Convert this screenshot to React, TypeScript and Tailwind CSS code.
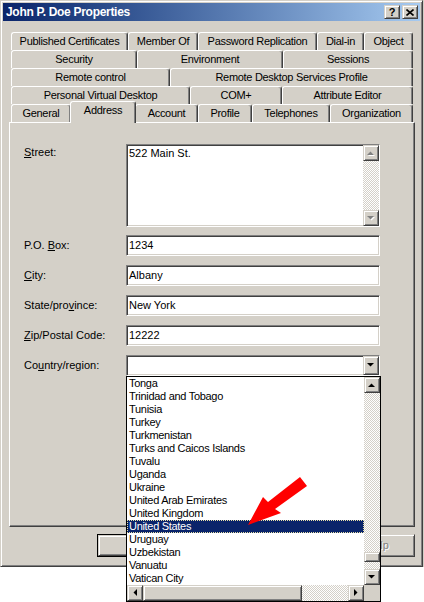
import React from 'react';

// classic 3d edges
const raised =
  'bg-[#d4d0c8] border border-t-[#d4d0c8] border-l-[#d4d0c8] border-r-[#404040] border-b-[#404040] shadow-[inset_1px_1px_0_#ffffff,inset_-1px_-1px_0_#808080]';
const sunken =
  'bg-white border border-t-[#808080] border-l-[#808080] border-r-white border-b-white shadow-[inset_1px_1px_0_#404040,inset_-1px_-1px_0_#d4d0c8]';
const checker =
  'bg-[image:repeating-conic-gradient(#d4d0c8_0_25%,#ffffff_0_50%)] bg-[length:2px_2px]';

type Dir = 'up' | 'down' | 'left' | 'right';

const triPts: Record<Dir, string> = {
  up: '0,4 7,4 3.5,0.5',
  down: '0,0 7,0 3.5,3.5',
  left: '4,0 4,7 0.5,3.5',
  right: '0,0 0,7 3.5,3.5',
};

const Tri = ({ dir, disabled }: { dir: Dir; disabled?: boolean }) => {
  const horiz = dir === 'left' || dir === 'right';
  const w = horiz ? 5 : 8;
  const h = horiz ? 8 : 5;
  return (
    <svg width={w} height={h} viewBox={`0 0 ${w} ${h}`}>
      {disabled && <polygon points={triPts[dir]} fill="#ffffff" transform="translate(1,1)" />}
      <polygon points={triPts[dir]} fill={disabled ? '#808080' : '#000000'} />
    </svg>
  );
};

const ScrollBtn = ({ dir, disabled }: { dir: Dir; disabled?: boolean }) => (
  <div className={`${raised} w-[16px] h-[16px] shrink-0 flex items-center justify-center`}>
    <Tri dir={dir} disabled={disabled} />
  </div>
);

const tabBase =
  'flex h-[18px] items-center justify-center whitespace-nowrap tracking-[-0.3px] bg-[#d4d0c8] border-l border-t border-r border-l-white border-t-white border-r-[#404040] shadow-[inset_-1px_0_0_#808080] rounded-t-[3px]';

const tabRows: { label: string; w: string; selected?: boolean }[][] = [
  [
    { label: 'Published Certificates', w: 'w-[117px]' },
    { label: 'Member Of', w: 'w-[70px]' },
    { label: 'Password Replication', w: 'w-[119px]' },
    { label: 'Dial-in', w: 'w-[47px]' },
    { label: 'Object', w: 'w-[49px]' },
  ],
  [
    { label: 'Security', w: 'w-[126px]' },
    { label: 'Environment', w: 'w-[146px]' },
    { label: 'Sessions', w: 'w-[130px]' },
  ],
  [
    { label: 'Remote control', w: 'w-[159px]' },
    { label: 'Remote Desktop Services Profile', w: 'w-[243px]' },
  ],
  [
    { label: 'Personal Virtual Desktop', w: 'w-[179px]' },
    { label: 'COM+', w: 'w-[92px]' },
    { label: 'Attribute Editor', w: 'w-[131px]' },
  ],
  [
    { label: 'General', w: 'w-[60px]' },
    { label: 'Address', w: 'w-[66px]', selected: true },
    { label: 'Account', w: 'w-[63px]' },
    { label: 'Profile', w: 'w-[54px]' },
    { label: 'Telephones', w: 'w-[78px]' },
    { label: 'Organization', w: 'w-[83px]' },
  ],
];

const countries = [
  'Tonga',
  'Trinidad and Tobago',
  'Tunisia',
  'Turkey',
  'Turkmenistan',
  'Turks and Caicos Islands',
  'Tuvalu',
  'Uganda',
  'Ukraine',
  'United Arab Emirates',
  'United Kingdom',
  'United States',
  'Uruguay',
  'Uzbekistan',
  'Vanuatu',
  'Vatican City',
];

const Field = ({ value }: { value: string }) => (
  <div className={`${sunken} w-[254px] h-[21px] flex items-center pl-[2px] leading-[13px]`}>{value}</div>
);

export default function App() {
  return (
    <div className="relative w-[424px] h-[602px] bg-white overflow-hidden text-[11px] text-black font-[family-name:Liberation_Sans,Arial,sans-serif]">
      <div className="w-[424px] h-[567px] bg-[#d4d0c8]">
        <div className="w-[423px] h-[567px] flex flex-col p-[2px] bg-[#d4d0c8] border border-t-[#d4d0c8] border-l-[#d4d0c8] border-r-[#404040] border-b-[#404040] shadow-[inset_1px_1px_0_#ffffff,inset_-1px_-1px_0_#808080]">
          {/* Title bar */}
          <div className="h-[18px] flex items-center justify-between pl-[3px] pr-[2px] bg-linear-to-r from-[#0a246a] to-[#a6caf0]">
            <span className="text-white font-bold text-[12px] tracking-[-0.3px] leading-[14px]">John P. Doe Properties</span>
            <div className="flex gap-[2px]">
              <div className={`${raised} w-[16px] h-[14px] flex items-center justify-center font-bold text-[11px] leading-[10px]`}>?</div>
              <div className={`${raised} w-[16px] h-[14px] flex items-center justify-center`}>
                <svg width="8" height="7" viewBox="0 0 8 7">
                  <path d="M0.5 0.5 L7.5 6.5 M7.5 0.5 L0.5 6.5" stroke="#000" strokeWidth="1.6" />
                </svg>
              </div>
            </div>
          </div>

          {/* Tabs */}
          <div className="mt-[11px] ml-[8px] w-[402px] flex flex-col">
            {tabRows.map((row, i) => (
              <div key={i} className="flex h-[18px]">
                {row.map(t =>
                  t.selected ? (
                    <div
                      key={t.label}
                      className={`relative z-10 -mt-[3px] -mx-[1px] h-[22px] ${t.w} flex justify-center pt-[2px] leading-[13px] tracking-[-0.3px] bg-[#d4d0c8] border-l border-t border-r border-l-white border-t-white border-r-[#404040] shadow-[inset_-1px_0_0_#808080] rounded-t-[3px]`}
                    >
                      {t.label}
                    </div>
                  ) : (
                    <div key={t.label} className={`${tabBase} ${t.w} leading-[13px]`}>
                      {t.label}
                    </div>
                  )
                )}
              </div>
            ))}
          </div>

          {/* Panel */}
          <div className="ml-[6px] w-[406px] h-[405px] flex flex-col pt-[21px] pl-[14px] border border-t-white border-l-white border-r-[#404040] border-b-[#404040] shadow-[inset_-1px_-1px_0_#808080]">
            <div className="flex">
              <div className="w-[102px] pt-[2px] leading-[13px]">
                <u>S</u>treet:
              </div>
              <div className={`${sunken} w-[254px] h-[83px] flex`}>
                <div className="flex-1 pl-[2px] pt-[2px] leading-[13px]">522 Main St.</div>
                <div className="w-[16px] flex flex-col">
                  <ScrollBtn dir="up" disabled />
                  <div className={`flex-1 ${checker}`} />
                  <ScrollBtn dir="down" disabled />
                </div>
              </div>
            </div>

            <div className="flex items-center mt-[8px]">
              <div className="w-[102px]">
                P.O. <u>B</u>ox:
              </div>
              <Field value="1234" />
            </div>
            <div className="flex items-center mt-[9px]">
              <div className="w-[102px]">
                <u>C</u>ity:
              </div>
              <Field value="Albany" />
            </div>
            <div className="flex items-center mt-[9px]">
              <div className="w-[102px]">
                State/pro<u>v</u>ince:
              </div>
              <Field value="New York" />
            </div>
            <div className="flex items-center mt-[9px]">
              <div className="w-[102px]">
                <u>Z</u>ip/Postal Code:
              </div>
              <Field value="12222" />
            </div>
            <div className="flex items-center mt-[9px]">
              <div className="w-[102px]">
                Co<u>u</u>ntry/region:
              </div>
              <div className="relative w-[254px] h-[21px]">
                <div className={`${sunken} w-full h-full flex justify-end`}>
                  <div className={`${raised} w-[16px] h-full flex items-center justify-center`}>
                    <Tri dir="down" />
                  </div>
                </div>

                {/* open dropdown list */}
                <div className="absolute left-0 top-full z-20 w-[255px] h-[226px] flex flex-col bg-white border border-black tracking-[-0.3px]">
                  <div className="flex h-[208px]">
                    <div className="flex-1 flex flex-col">
                      {countries.map(c =>
                        c === 'United States' ? (
                          <div
                            key={c}
                            className="h-[13px] leading-[11px] pl-[1px] bg-[#0a246a] text-white border border-dotted border-[#e8e0a8] whitespace-nowrap"
                          >
                            {c}
                          </div>
                        ) : (
                          <div key={c} className="h-[13px] leading-[13px] pl-[2px] whitespace-nowrap">
                            {c}
                          </div>
                        )
                      )}
                    </div>
                    <div className="w-[16px] flex flex-col">
                      <ScrollBtn dir="up" />
                      <div className={`flex-1 ${checker}`} />
                      <div className={`${raised} h-[10px]`} />
                      <div className={`h-[7px] ${checker}`} />
                      <ScrollBtn dir="down" />
                    </div>
                  </div>
                  <div className="flex h-[16px]">
                    <ScrollBtn dir="left" />
                    <div className={`${raised} w-[159px] h-[16px]`} />
                    <div className={`flex-1 ${checker}`} />
                    <ScrollBtn dir="right" />
                    <div className="w-[16px] bg-[#d4d0c8]" />
                  </div>
                </div>
              </div>
            </div>
          </div>

          {/* Buttons (mostly covered by the open list) */}
          <div className="ml-[6px] w-[406px] mt-[7px] flex justify-end gap-[6px]">
            <div className="w-[75px] h-[23px] border border-black">
              <div className={`${raised} w-full h-full`} />
            </div>
            <div className={`${raised} w-[75px] h-[23px]`} />
            <div className={`${raised} w-[75px] h-[23px]`} />
            <div className={`${raised} w-[75px] h-[23px] flex items-center justify-center text-[#808080] [text-shadow:1px_1px_0_#ffffff]`}>
              Help
            </div>
          </div>
        </div>
      </div>

      {/* red annotation arrow */}
      <svg className="absolute left-0 top-0 z-30 pointer-events-none" width="424" height="602">
        <polygon points="248,525 263,497 268,502 300,477 307,486 275,509 281,513" fill="#ff0000" />
      </svg>
    </div>
  );
}
